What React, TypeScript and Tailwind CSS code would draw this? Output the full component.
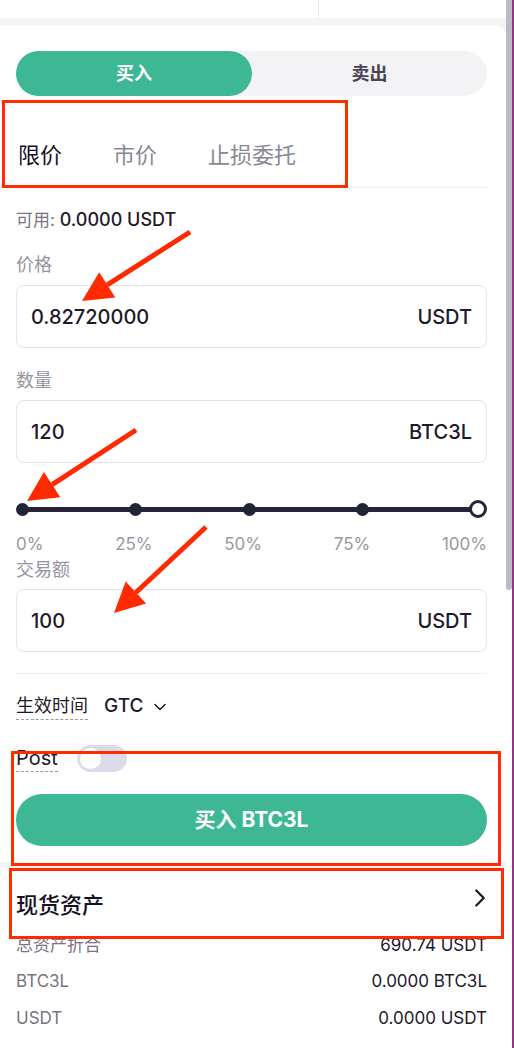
import React from "react";
import { ChevronDown, ChevronRight } from "lucide-react";

const font = { fontFamily: "Inter, 'Noto Sans CJK SC', sans-serif" };

const Field = ({ value, unit }: { value: string; unit: string }) => (
  <div className="h-[63px] border border-[#e3e2ec] rounded-lg flex items-center justify-between pl-[14px] pr-[14px] text-[20px] font-medium text-[#1e1a2b]">
    <span>{value}</span>
    <span>{unit}</span>
  </div>
);

const marks = ["0%", "25%", "50%", "75%", "100%"];

const Arrow = ({ x1, y1, x2, y2 }: { x1: number; y1: number; x2: number; y2: number }) => {
  const a = Math.atan2(y2 - y1, x2 - x1);
  const len = 30;
  const w = 15;
  const bx = x2 - len * Math.cos(a);
  const by = y2 - len * Math.sin(a);
  const px = -Math.sin(a) * w;
  const py = Math.cos(a) * w;
  return (
    <>
      <line x1={x1} y1={y1} x2={bx} y2={by} stroke="#ff2a00" strokeWidth="5" />
      <polygon points={`${x2},${y2} ${bx + px},${by + py} ${bx - px},${by - py}`} fill="#ff2a00" />
    </>
  );
};

export default function App() {
  return (
    <div className="relative w-[514px] h-[1048px] overflow-hidden bg-[#f4f4f6] flex" style={font}>
      <div className="flex-1 flex flex-col">
        {/* top strip */}
        <div className="h-[18px] bg-white flex">
          <div className="w-[319px] border-r border-[#ececf0]" />
        </div>
        <div className="h-[7px]" />

        {/* order card */}
        <div className="bg-white rounded-tr-xl pl-4 pr-[19px] pt-[26px] h-[837px]">
          <div className="flex h-[45px] rounded-full bg-[#f3f3f6] text-[18px] font-bold">
            <div className="w-[236px] rounded-full bg-[#3eb795] text-white flex items-center justify-center">买入</div>
            <div className="flex-1 flex items-center justify-center text-[#4a4452]">卖出</div>
          </div>

          <div className="flex gap-[51px] h-[92px] items-end border-b border-[#eeeef2] text-[22px] leading-7">
            <div className="relative pb-[18px] text-[#15121f] pl-[2px]">
              限价
              <div className="absolute left-0 right-0 bottom-0 h-[2px] bg-[#7a4a8a]" />
            </div>
            <div className="pb-[18px] text-[#8a8794]">市价</div>
            <div className="pb-[18px] text-[#8a8794]">止损委托</div>
          </div>

          <div className="mt-[20px] text-[17px] leading-6">
            <span className="text-[#77737f]">可用: </span>
            <span className="text-[#1e1a2b] font-medium text-[18px]">0.0000 USDT</span>
          </div>

          <div className="mt-[21px] text-[18px] text-[#96939e] leading-6">价格</div>
          <div className="mt-[8px]"><Field value="0.82720000" unit="USDT" /></div>

          <div className="mt-[21px] text-[18px] text-[#96939e] leading-6">数量</div>
          <div className="mt-[7px]"><Field value="120" unit="BTC3L" /></div>

          {/* slider */}
          <div className="relative mt-[37px] h-[18px]">
            <div className="absolute left-[5px] right-[5px] top-[7px] h-[5px] bg-[#2a2236]" />
            <div className="absolute inset-0 flex justify-between items-center">
              {[0, 1, 2, 3].map((i) => (
                <div key={i} className="w-[13px] h-[13px] rounded-full bg-[#1f2536]" />
              ))}
              <div className="w-[18px] h-[18px] rounded-full bg-white border-[3px] border-[#2a2236]" />
            </div>
          </div>
          <div className="mt-[15px] flex justify-between text-[17px] text-[#9a97a2] leading-[22px]">
            {marks.map((m) => (
              <span key={m}>{m}</span>
            ))}
          </div>

          <div className="mt-[3px] text-[18px] text-[#96939e] leading-6">交易额</div>
          <div className="mt-[7px]"><Field value="100" unit="USDT" /></div>

          <div className="mt-[21px] border-t border-[#eeeef2]" />

          <div className="mt-[19px] flex items-center gap-[16px] text-[18px] text-[#1e1a2b] h-[27px]">
            <span className="border-b border-dashed border-[#9a97a2] leading-[26px]">生效时间</span>
            <span className="flex items-center gap-[7px] font-medium text-[19px]">
              GTC <ChevronDown size={20} strokeWidth={1.8} />
            </span>
          </div>

          <div className="mt-[24px] flex items-center gap-[19px] h-[28px]">
            <span className="border-b border-dashed border-[#9a97a2] text-[20px] text-[#1e1a2b] leading-[26px]">Post</span>
            <div className="w-[50px] h-[27px] rounded-full bg-[#dcdbe9] p-[3px]">
              <div className="w-[21px] h-[21px] rounded-full bg-white" />
            </div>
          </div>

          <div className="mt-[22px] h-[52px] rounded-full bg-[#3eb795] text-white text-[21px] font-bold flex items-center justify-center">
            买入 BTC3L
          </div>
        </div>

        <div className="h-[6px]" />

        {/* assets card */}
        <div className="flex-1 bg-white pl-4 pr-[19px]">
          <div className="h-[59px] flex items-center justify-between pt-[15px]">
            <span className="text-[22px] font-medium text-[#15121f]">现货资产</span>
            <ChevronRight size={30} strokeWidth={1.8} className="text-[#1e1a2b] -mr-[8px] -mt-[14px]" />
          </div>
          {[
            ["总资产折合", "690.74 USDT"],
            ["BTC3L", "0.0000 BTC3L"],
            ["USDT", "0.0000 USDT"],
          ].map(([k, v]) => (
            <div key={k} className="h-[36.5px] flex items-center justify-between text-[17px]">
              <span className="text-[#77737f]">{k}</span>
              <span className="text-[#1e1a2b]">{v}</span>
            </div>
          ))}
        </div>
      </div>

      {/* scrollbar + window edge */}
      <div className="w-[6px] bg-white flex flex-col">
        <div className="h-[590px] bg-[#bdbbc2] rounded-b-full" />
      </div>
      <div className="w-[2px] bg-[#8e3a7e]" />

      {/* annotations */}
      <div className="absolute left-[2px] top-[100px] w-[346px] h-[88px] border-[3px] border-[#ff2a00]" />
      <div className="absolute left-[11px] top-[751px] w-[490px] h-[115px] border-[3px] border-[#ff2a00]" />
      <div className="absolute left-[9px] top-[868px] w-[495px] h-[71px] border-[3px] border-[#ff2a00]" />
      <svg className="absolute inset-0 pointer-events-none" width="514" height="1048">
        <Arrow x1={190} y1={232} x2={82} y2={301} />
        <Arrow x1={136} y1={430} x2={27} y2={501} />
        <Arrow x1={206} y1={527} x2={114} y2={613} />
      </svg>
    </div>
  );
}
